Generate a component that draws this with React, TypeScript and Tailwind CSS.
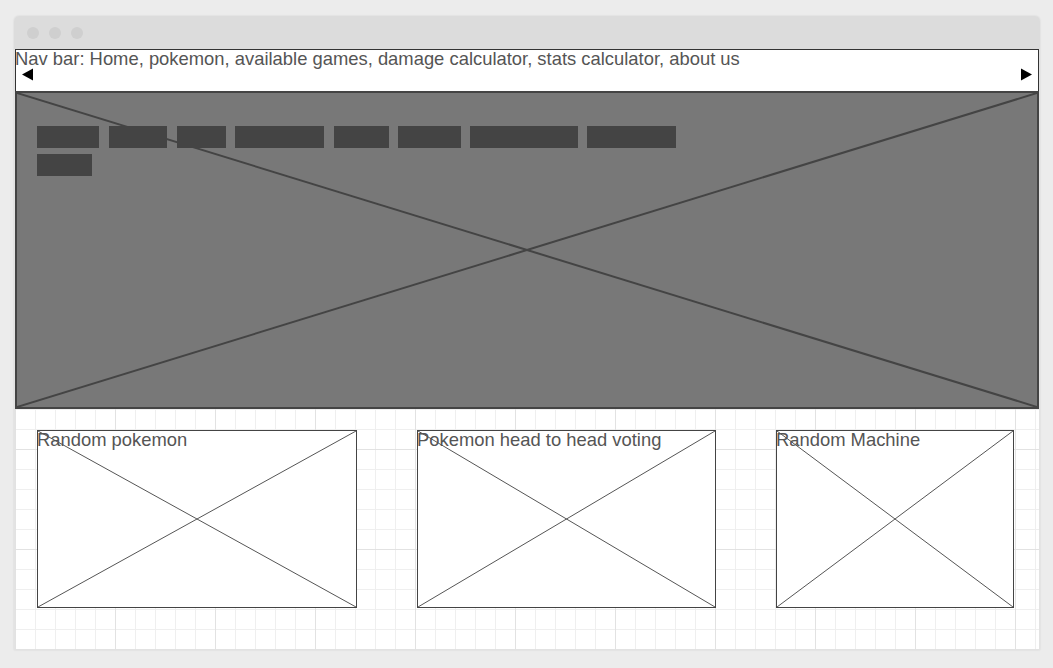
import React from "react";

function XLines({ width = 1, color = "#555" }: { width?: number; color?: string }) {
  return (
    <svg className="absolute inset-0 w-full h-full" preserveAspectRatio="none" viewBox="0 0 100 100">
      <line x1="0" y1="0" x2="100" y2="100" stroke={color} strokeWidth={width} vectorEffect="non-scaling-stroke" />
      <line x1="100" y1="0" x2="0" y2="100" stroke={color} strokeWidth={width} vectorEffect="non-scaling-stroke" />
    </svg>
  );
}

const row1 = [
  { w: 62, m: 0 },
  { w: 58, m: 10 },
  { w: 49, m: 10 },
  { w: 89, m: 9 },
  { w: 55, m: 10 },
  { w: 63, m: 9 },
  { w: 108, m: 9 },
  { w: 89, m: 9 },
];

function Card({ title, w }: { title: string; w: string }) {
  return (
    <div className={`relative h-[178px] bg-white border border-[#444] ${w}`}>
      <XLines width={1} color="#555" />
      <div className="relative -ml-px -mt-[1px] text-[18.4px] leading-[20px] text-[#555] whitespace-nowrap">{title}</div>
    </div>
  );
}

export default function App() {
  return (
    <div
      className="w-[1053px] h-[668px] bg-[#ececec] pt-[16px] pl-[14px] overflow-hidden"
      style={{ fontFamily: '"Liberation Sans", Arial, sans-serif' }}
    >
      <div className="w-[1026px] h-[634px] flex flex-col rounded-t-[5px] overflow-hidden shadow-[0_0_2px_rgba(0,0,0,0.12)]">
        <div className="h-[33px] shrink-0 bg-[#dcdcdc] flex items-center pl-[13px] gap-[10px]">
          <span className="w-[12px] h-[12px] rounded-full bg-[#cfcfcf]" />
          <span className="w-[12px] h-[12px] rounded-full bg-[#cfcfcf]" />
          <span className="w-[12px] h-[12px] rounded-full bg-[#cfcfcf]" />
        </div>
        <div className="flex-1 border-x border-[#e3e3e3] bg-white bg-[image:linear-gradient(to_right,#e2e2e2_1px,transparent_1px),linear-gradient(to_bottom,#e2e2e2_1px,transparent_1px),linear-gradient(to_right,#efefef_1px,transparent_1px),linear-gradient(to_bottom,#efefef_1px,transparent_1px)] bg-[size:100px_100px,100px_100px,20px_20px,20px_20px]">
          <div className="relative h-[42px] bg-white border-t border-x border-[#333]">
            <div className="-ml-px -mt-[1px] text-[18.4px] leading-[20px] text-[#555] whitespace-nowrap">
              Nav bar: Home, pokemon, available games, damage calculator, stats calculator, about us
            </div>
            <svg className="absolute left-[6px] top-[18px]" width="12" height="13" viewBox="0 0 12 13">
              <polygon points="0,6.5 11,0.5 11,12.5" fill="#000" />
            </svg>
            <svg className="absolute right-[6px] top-[18px]" width="12" height="13" viewBox="0 0 12 13">
              <polygon points="1,0.5 12,6.5 1,12.5" fill="#000" />
            </svg>
          </div>
          <div className="relative h-[318px] bg-[#787878] border-2 border-[#444]">
            <XLines width={2} color="#444" />
            <div className="relative ml-[20px] mt-[33px] flex flex-col gap-[6px]">
              <div className="flex">
                {row1.map((t, i) => (
                  <div key={i} className="h-[22px] bg-[#444]" style={{ width: t.w, marginLeft: t.m }} />
                ))}
              </div>
              <div className="flex">
                <div className="h-[22px] w-[55px] bg-[#444]" />
              </div>
            </div>
          </div>
          <div className="flex gap-[60px] pl-[22px] pt-[21px]">
            <Card title="Random pokemon" w="w-[320px]" />
            <Card title="Pokemon head to head voting" w="w-[299px]" />
            <Card title="Random Machine" w="w-[238px]" />
          </div>
        </div>
      </div>
    </div>
  );
}
